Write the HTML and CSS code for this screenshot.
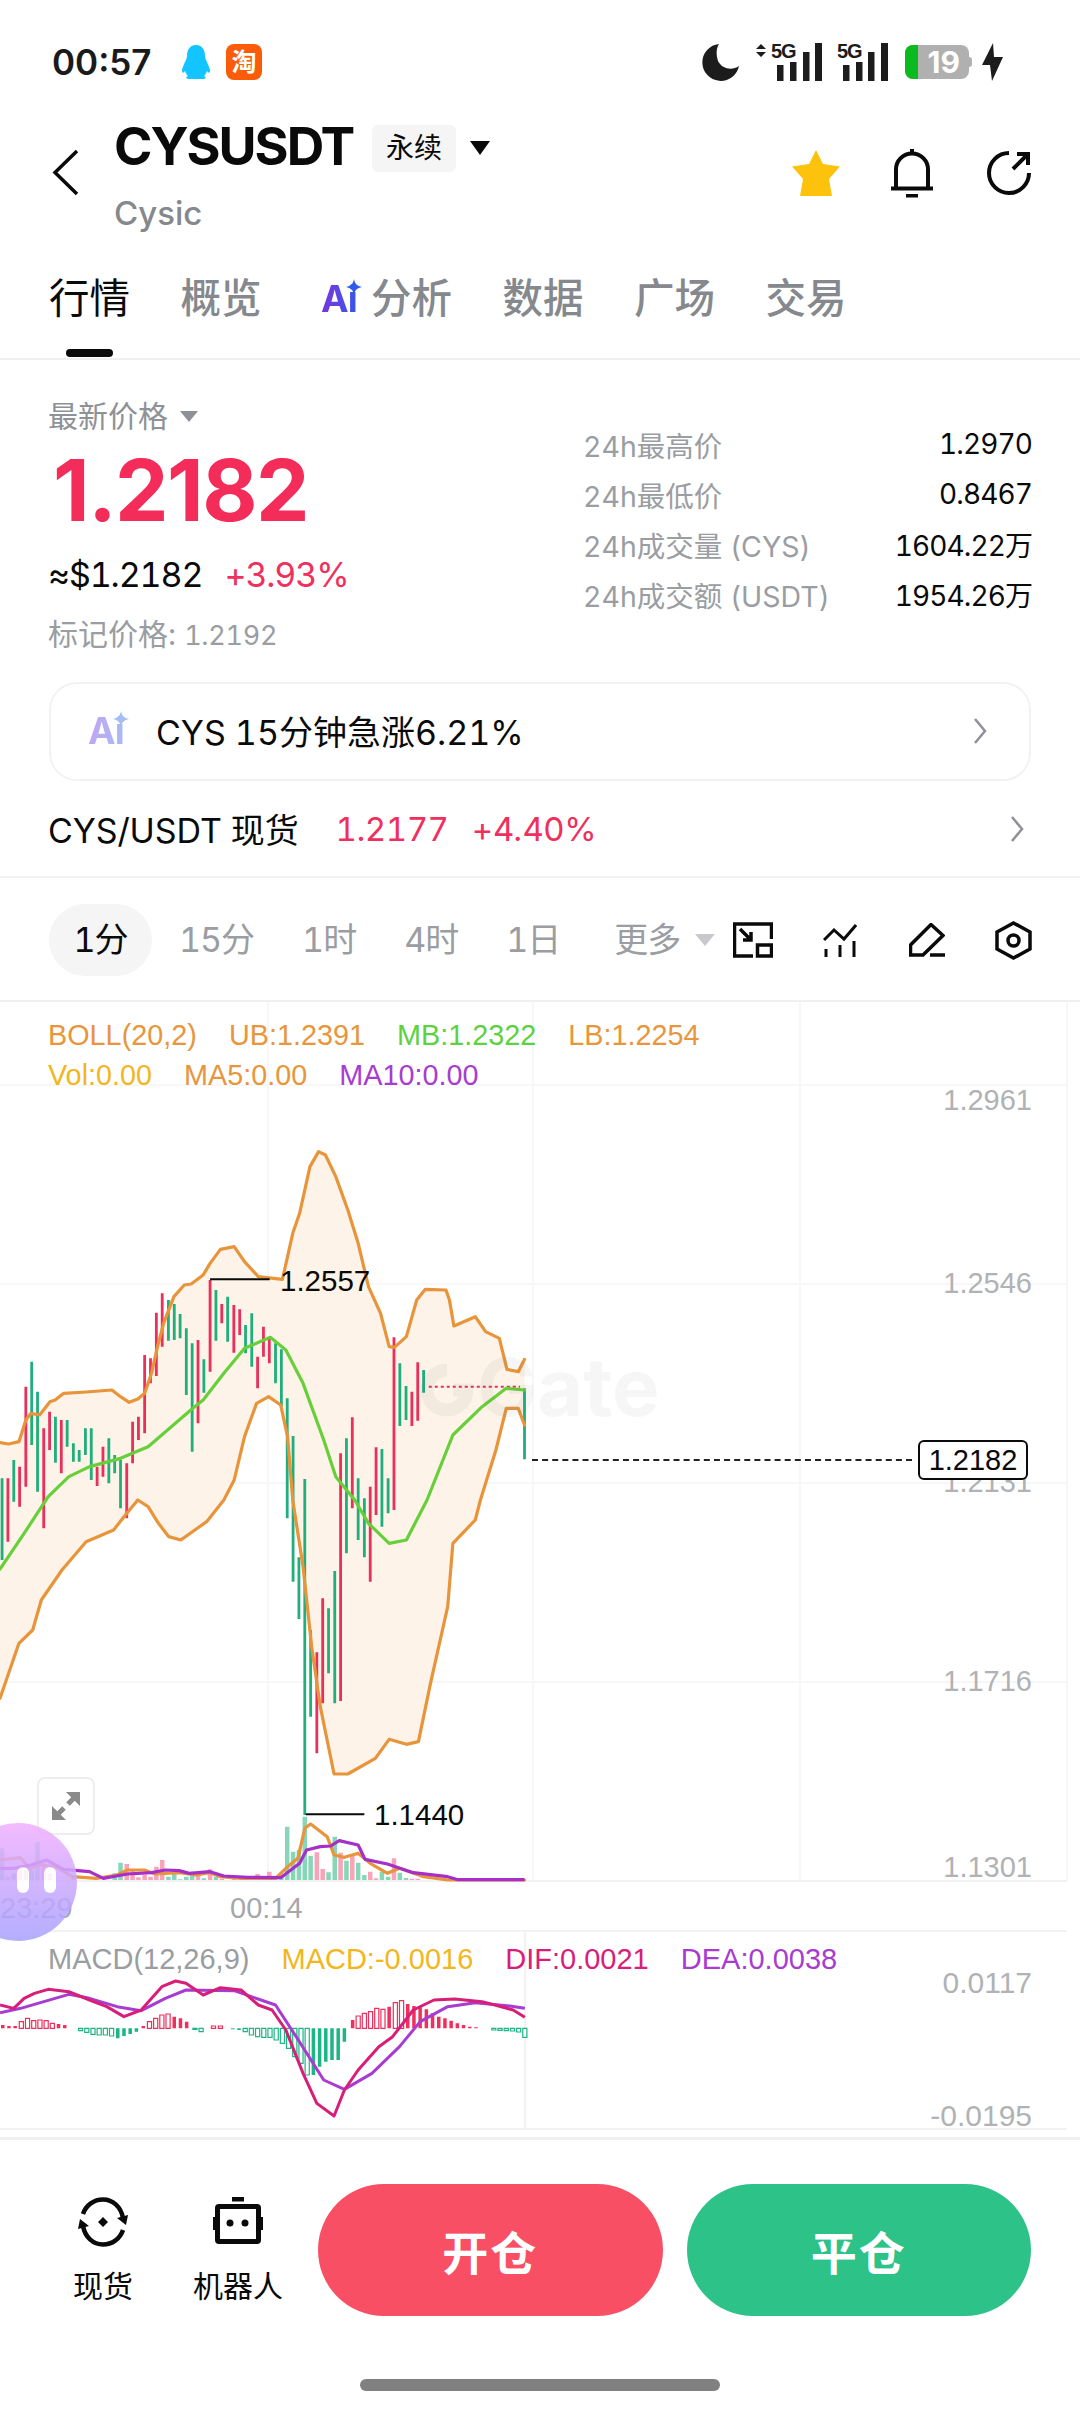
FILE: index.html
```html
<!DOCTYPE html>
<html lang="zh">
<head>
<meta charset="utf-8">
<title>CYSUSDT</title>
<link rel="stylesheet" href="styles.css">
</head>
<body>
<div class="page">
  <div class="status">
    <span class="time">00:57</span>
    <svg class="qq" viewBox="0 0 30 34"><path d="M15 0C8 0 6 6 6 11C6 14 3 18 1 25C1 28 2 29 4 26C5 29 6 30 7 31C4 32 5 34 9 34H21C25 34 26 32 23 31C24 30 25 29 26 26C28 29 29 28 29 25C27 18 24 14 24 11C24 6 22 0 15 0Z"/></svg>
    <span class="taobao">淘</span>
    <span class="status-right">
      <svg class="moon" viewBox="0 0 37 37"><path d="M17 0A18.5 18.5 0 1 0 37 22C30 27 20 25 16 17C14 11 14 5 17 0Z"/></svg>
      <svg class="signal first" viewBox="0 0 68 38">
        <path class="ink" d="M5 1L10 6H0ZM5 14L0 9H10Z"/>
        <text class="five-g" x="15" y="15">5G</text>
        <path class="ink" d="M21 22h6.500v16h-6.500zM34 19h6.500v19h-6.500zM47 9h6.500v29h-6.500zM59 0h7v38h-7z"/>
      </svg>
      <svg class="signal second" viewBox="0 0 54 38">
        <text class="five-g" x="1" y="15">5G</text>
        <path class="ink" d="M7 22h6.500v16h-6.500zM20 19h6.500v19h-6.500zM32 9h6.500v29h-6.500zM45 0h7v38h-7z"/>
      </svg>
      <span class="battery"><span class="battery-level"></span><span class="battery-num">19</span></span>
      <svg class="bolt" viewBox="0 0 21 38"><path d="M11 0L0 22H8L10 38L21 14H12Z"/></svg>
    </span>
  </div>

  <div class="header">
    <svg class="back" viewBox="0 0 28 48"><path d="M25 2L3 23.500L25 45"/></svg>
    <div class="name-block">
      <div class="title-row">
        <span class="title">CYSUSDT</span>
        <span class="badge">永续</span>
        <span class="caret"></span>
      </div>
      <div class="subtitle">Cysic</div>
    </div>
    <div class="header-actions">
      <svg class="star" viewBox="0 0 50 48"><path d="M25 1L32 15L49 17.500L38 30L41 47H9L12 30L1 17.500L18 15Z"/></svg>
      <svg class="bell" viewBox="0 0 42 50"><path d="M5 40V21.500a16 16 0 0 1 32 0V40M0 40.500H42M21 1V6"/><rect x="15" y="46" width="12" height="3.500"/></svg>
      <svg class="share" viewBox="0 0 50 50"><path d="M25 5A20 20 0 1 0 45 25M29 21L44 6M33 6H44V17"/></svg>
    </div>
  </div>

  <div class="tabs">
    <span class="tab active">行情</span>
    <span class="tab">概览</span>
    <span class="tab ai-tab"><span class="ai-mark">Ai<svg class="spark" viewBox="0 0 16 16"><path d="M8 0C9 5 11 7 16 8C11 9 9 11 8 16C7 11 5 9 0 8C5 7 7 5 8 0Z"/></svg></span>分析</span>
    <span class="tab">数据</span>
    <span class="tab">广场</span>
    <span class="tab">交易</span>
  </div>

  <div class="quote">
    <div class="quote-left">
      <div class="last-label">最新价格<span class="mini-caret"></span></div>
      <div class="last-price">1.2182</div>
      <div class="fiat-row"><span>≈$1.2182</span><span class="up">+3.93%</span></div>
      <div class="mark">标记价格: <span class="mark-num">1.2192</span></div>
    </div>
    <div class="stats">
      <div class="stat"><span>24h最高价</span><b>1.2970</b></div>
      <div class="stat"><span>24h最低价</span><b>0.8467</b></div>
      <div class="stat"><span>24h成交量 (CYS)</span><b>1604.22万</b></div>
      <div class="stat"><span>24h成交额 (USDT)</span><b>1954.26万</b></div>
    </div>
  </div>

  <div class="alert">
    <span class="ai-mark light">Ai<svg class="spark" viewBox="0 0 16 16"><path d="M8 0C9 5 11 7 16 8C11 9 9 11 8 16C7 11 5 9 0 8C5 7 7 5 8 0Z"/></svg></span>
    <span class="alert-text">CYS 15分钟急涨6.21%</span>
    <svg class="chev" viewBox="0 0 14 28"><path d="M2 2L12 14L2 26"/></svg>
  </div>

  <div class="spot">
    <span class="spot-name">CYS/USDT 现货</span>
    <span class="up spot-price">1.2177</span>
    <span class="up spot-change">+4.40%</span>
    <svg class="chev" viewBox="0 0 14 28"><path d="M2 2L12 14L2 26"/></svg>
  </div>

  <div class="intervals">
    <span class="interval on">1分</span>
    <span class="interval">15分</span>
    <span class="interval">1时</span>
    <span class="interval">4时</span>
    <span class="interval">1日</span>
    <span class="interval more">更多<span class="more-caret"></span></span>
    <svg class="tool t1" viewBox="0 0 40 36"><path d="M1.500 17V2H38.500V17M1.500 2V34H20M7 7L18 18M18 10V18H10"/><rect x="24.500" y="23" width="14" height="11"/></svg>
    <svg class="tool t2" viewBox="0 0 34 33"><path d="M1 16L11 6L21 15L33 1M3 25V33M17 21V33M31 17V33"/></svg>
    <svg class="tool t3" viewBox="0 0 36 34"><path d="M22 1.500L34 12.500L14 32H1.500V22ZM21 32H36"/></svg>
    <svg class="tool t4" viewBox="0 0 37 39"><path d="M18.500 2L35 11V28L18.500 37L2 28V11Z"/><circle cx="18.500" cy="19.500" r="5.500"/></svg>
  </div>

  <div class="chart">
    <svg class="plot" viewBox="0 0 3136 3414" preserveAspectRatio="none">
      <path class="rule" d="M0 3H3136"/>
      <path class="grid" d="M0 255H3098M0 852H3098M0 1449H3098M0 2046H3098M778 6V2643M1548 6V2643M2323 6V2643M3098 6V2643"/>
      <path class="grid strong" d="M0 2643H3098M140 2793H3098M0 3387H3098M1525 2793V3387"/>
      <polygon class="band" points="0,1328 25,1332 55,1325 75,1260 90,1240 115,1245 145,1205 160,1200 185,1180 250,1176 325,1170 350,1190 375,1207 400,1197 420,1180 440,1120 455,1050 475,970 505,890 535,855 555,852 590,825 610,790 640,748 680,740 710,785 750,830 820,838 835,770 850,700 870,640 900,500 925,455 945,465 975,530 1010,630 1040,730 1070,860 1105,940 1130,1040 1145,1042 1180,1010 1210,900 1235,868 1295,870 1305,900 1318,978 1380,950 1410,995 1450,1015 1472,1108 1505,1115 1523,1078 1523,1275 1505,1225 1470,1225 1440,1350 1395,1500 1380,1560 1315,1630 1300,1820 1250,2050 1215,2225 1180,2233 1130,2218 1090,2275 1010,2322 970,2322 930,2120 905,1940 880,1700 850,1500 835,1310 815,1215 780,1190 745,1210 710,1310 680,1440 650,1500 600,1565 525,1620 490,1610 460,1570 430,1520 400,1500 360,1550 330,1590 250,1625 180,1710 120,1800 95,1890 55,1930 0,2095"/>
      <path class="wick green" d="M6 1435V1680M40 1380V1505M92 1085V1335M109 1175V1475M161 1250V1388M195 1260V1340M213 1330V1385M230 1350V1385M248 1285V1365M265 1285V1440M316 1315V1450M333 1365V1420M350 1380V1525M489 900V1022M506 912V1020M523 942V1015M541 985V1185M558 1030V1355M592 1078V1178M627 870V1022M661 890V1025M713 975V1060M731 940V1100M800 1030V1150M817 1048V1220M834 1195V1555M851 1308V1745M868 1672V1857M885 1437V2445M902 1890V2150M954 1825V2020M972 1713V2110M1006 1315V1660M1040 1435V1620M1058 1495V1672M1109 1347V1580M1127 1435V1540M1161 1090V1278M1179 1158V1260M1230 1110V1178M1523 1165V1378"/>
      <path class="wick red" d="M23 1435V1625M57 1400V1520M75 1160V1460M127 1285V1585M144 1235V1350M178 1260V1420M282 1400V1458M299 1340V1430M368 1390V1555M385 1265V1390M402 1250V1320M420 1065V1300M437 1075V1150M454 938V1128M471 880V1040M575 1020V1270M610 840V1115M644 912V970M679 915V1058M696 928V1005M748 1070V1165M765 980V1070M782 1015V1090M920 1957V2260M937 1795V2110M989 1360V2103M1023 1252V1525M1075 1460V1745M1092 1342V1545M1144 1012V1530M1196 1175V1278M1213 1087V1262"/>
      <path class="dots" d="M1245 1160H1510"/>
      <polyline class="boll" points="0,1328 25,1332 55,1325 75,1260 90,1240 115,1245 145,1205 160,1200 185,1180 250,1176 325,1170 350,1190 375,1207 400,1197 420,1180 440,1120 455,1050 475,970 505,890 535,855 555,852 590,825 610,790 640,748 680,740 710,785 750,830 820,838 835,770 850,700 870,640 900,500 925,455 945,465 975,530 1010,630 1040,730 1070,860 1105,940 1130,1040 1145,1042 1180,1010 1210,900 1235,868 1295,870 1305,900 1318,978 1380,950 1410,995 1450,1015 1472,1108 1505,1115 1523,1078"/>
      <polyline class="boll" points="0,2095 55,1930 95,1890 120,1800 180,1710 250,1625 330,1590 360,1550 400,1500 430,1520 460,1570 490,1610 525,1620 600,1565 650,1500 680,1440 710,1310 745,1210 780,1190 815,1215 835,1310 850,1500 880,1700 905,1940 930,2120 970,2322 1010,2322 1090,2275 1130,2218 1180,2233 1215,2225 1250,2050 1300,1820 1315,1630 1380,1560 1395,1500 1440,1350 1470,1225 1505,1225 1523,1275"/>
      <polyline class="mid" points="0,1707 70,1600 140,1490 200,1430 260,1400 350,1375 430,1340 560,1225 590,1200 650,1120 710,1045 785,1012 830,1050 880,1150 940,1320 975,1430 1030,1500 1070,1570 1130,1630 1180,1620 1240,1500 1315,1305 1400,1220 1470,1165 1523,1170"/>
      <path class="marker" d="M610 838H783M888 2443H1058"/>
      <path class="vol green" d="M6 2640V2545M40 2640V2620M92 2640V2610M109 2640V2525M214 2640V2625M333 2640V2620M350 2640V2588M489 2640V2630M506 2640V2615M523 2640V2638M541 2640V2630M558 2640V2615M592 2640V2635M627 2640V2630M713 2640V2630M817 2640V2625M834 2640V2480M851 2640V2555M868 2640V2550M885 2640V2450M902 2640V2568M954 2640V2617M972 2640V2510M1006 2640V2582M1040 2640V2588M1058 2640V2625M1109 2640V2615M1127 2640V2630M1161 2640V2618M1179 2640V2634"/>
      <path class="vol red" d="M23 2640V2630M57 2640V2610M75 2640V2610M127 2640V2590M144 2640V2620M368 2640V2592M385 2640V2610M402 2640V2632M420 2640V2625M437 2640V2630M454 2640V2600M471 2640V2580M575 2640V2620M610 2640V2608M644 2640V2636M679 2640V2632M748 2640V2622M782 2640V2615M800 2640V2630M920 2640V2557M937 2640V2607M989 2640V2558M1023 2640V2565M1075 2640V2615M1092 2640V2635M1144 2640V2575M1196 2640V2636M1213 2640V2636"/>
      <polyline class="boll" points="0,2580 60,2573 85,2605 120,2595 160,2600 210,2630 280,2635 340,2625 370,2610 420,2610 450,2622 520,2618 570,2625 610,2618 640,2630 700,2635 800,2635 830,2605 865,2575 885,2485 902,2472 950,2510 970,2565 1000,2572 1040,2560 1075,2590 1125,2620 1160,2605 1230,2630 1300,2640 1523,2640"/>
      <polyline class="vol-ma" points="0,2605 40,2605 90,2595 135,2580 185,2608 260,2615 300,2635 370,2622 440,2618 480,2610 520,2612 550,2620 610,2615 650,2628 720,2632 815,2633 870,2590 890,2550 930,2540 960,2538 985,2522 1040,2535 1060,2578 1125,2592 1200,2618 1300,2630 1330,2639 1523,2639"/>
      <g transform="translate(0,2700) scale(2,1)">
        <path class="hist-red" d="M4 385V375M13 385V378M22 385V378M85 385V372M94 385V375M208 385V378M253 385V350M262 385V355M271 385V365M512 385V360M565 385V320M592 385V312M601 385V318M610 385V322M619 385V328M628 385V340M637 385V350M646 385V355M655 385V362M664 385V370M673 385V375M682 385V380M691 385V382"/>
        <path class="hist-red-o" d="M28 385V365H34V385ZM37 385V355H43V385ZM46 385V362H52V385ZM55 385V360H61V385ZM64 385V362H70V385ZM73 385V370H79V385ZM214 385V365H220V385ZM223 385V355H229V385ZM232 385V345H238V385ZM241 385V342H247V385ZM307 385V378H313V385ZM317 385V378H323V385ZM517 385V348H523V385ZM526 385V340H532V385ZM535 385V335H541V385ZM544 385V325H550V385ZM553 385V328H559V385ZM571 385V308H577V385ZM580 385V302H586V385Z"/>
        <path class="hist-green" d="M171 385V415M180 385V408M189 385V402M198 385V395M338 385V388M347 385V390M455 385V525M464 385V500M473 385V485M482 385V480M491 385V480M500 385V425"/>
        <path class="hist-green-o" d="M114 385V392H120V385ZM123 385V397H129V385ZM132 385V403H138V385ZM141 385V405H147V385ZM150 385V405H156V385ZM159 385V408H165V385ZM280 385V388H286V385ZM289 385V395H295V385ZM353 385V395H359V385ZM362 385V405H368V385ZM371 385V410H377V385ZM380 385V412H386V385ZM389 385V412H395V385ZM398 385V420H404V385ZM407 385V430H413V385ZM416 385V445H422V385ZM425 385V470H431V385ZM434 385V490H440V385ZM443 385V525H449V385ZM714 385V390H720V385ZM723 385V391H729V385ZM732 385V392H738V385ZM741 385V393H747V385ZM750 385V396H756V385ZM759 385V412H765V385Z"/>
        <polyline class="dea" points="0,338 30,325 100,283 130,295 170,320 205,332 240,295 270,270 340,272 400,315 430,410 470,540 500,568 540,520 580,440 610,365 650,320 690,308 740,318 762,325"/>
        <polyline class="dif" points="0,315 20,325 35,295 50,280 70,268 100,275 130,300 155,320 180,350 205,330 235,260 255,243 270,250 295,285 320,263 350,270 375,315 395,330 415,390 440,520 460,610 485,648 500,570 520,510 550,440 570,410 600,330 630,300 660,297 700,305 745,330 762,352"/>
      </g>
    </svg>

    <span class="watermark"><svg class="wm-logo" viewBox="0 0 54 54"><path d="M27 7A20 20 0 1 0 47 27H33"/></svg>Gate</span>

    <div class="legend boll-legend">
      <span class="c-orange">BOLL(20,2)</span>
      <span class="c-orange">UB:1.2391</span>
      <span class="c-green">MB:1.2322</span>
      <span class="c-orange">LB:1.2254</span>
    </div>
    <div class="legend vol-legend">
      <span class="c-yellow">Vol:0.00</span>
      <span class="c-orange">MA5:0.00</span>
      <span class="c-purple">MA10:0.00</span>
    </div>
    <div class="legend macd-legend">
      <span class="c-grey">MACD(12,26,9)</span>
      <span class="c-yellow">MACD:-0.0016</span>
      <span class="c-pink">DIF:0.0021</span>
      <span class="c-purple">DEA:0.0038</span>
    </div>

    <span class="ylabel y1">1.2961</span>
    <span class="ylabel y2">1.2546</span>
    <span class="ylabel y3">1.2131</span>
    <span class="ylabel y4">1.1716</span>
    <span class="ylabel y5">1.1301</span>
    <span class="ylabel y6">0.0117</span>
    <span class="ylabel y7">-0.0195</span>

    <span class="peak high">1.2557</span>
    <span class="peak low">1.1440</span>

    <span class="last-line"></span>
    <span class="last-tag">1.2182</span>

    <span class="expand">
      <svg viewBox="0 0 28 28"><path class="expand-head" d="M28 0H14L28 14ZM0 28H14L0 14Z"/><path class="expand-shaft" d="M22 6L16 12M6 22L12 16"/></svg>
    </span>

    <span class="xlabel x1">23:29</span>
    <span class="xlabel x2">00:14</span>

    <span class="bubble"><span class="pill"></span><span class="pill"></span></span>
  </div>

  <div class="bottom">
    <div class="actions">
      <div class="action">
        <svg class="swap" viewBox="0 0 50 50"><path class="swap-line" d="M5 17C8 8 16 2.500 25 2.500C35 2.500 43 10 45 21M45 33C42 42 34 47.500 25 47.500C15 47.500 7 40 5 29"/><path class="swap-fill" d="M25 20L30 25L25 30L20 25ZM50 18L48 28L39 21ZM0 32L2 22L11 29Z"/></svg>
        <span>现货</span>
      </div>
      <div class="action">
        <svg class="robot" viewBox="0 0 50 47"><rect class="robot-top" x="19" y="0" width="12" height="4.500"/><rect class="robot-body" x="4.500" y="9.500" width="41" height="35" rx="1.500"/><rect class="robot-top" x="0" y="20" width="3" height="13"/><rect class="robot-top" x="47" y="20" width="3" height="13"/><circle class="robot-eye" cx="17" cy="26" r="3.500"/><circle class="robot-eye" cx="32" cy="26" r="3.500"/></svg>
        <span>机器人</span>
      </div>
    </div>
    <button class="cta open">开仓</button>
    <button class="cta close">平仓</button>
  </div>
  <div class="home-bar"></div>
</div>
</body>
</html>
```

FILE: styles.css
```css
* { box-sizing: border-box; }
html, body { margin: 0; padding: 0; background: #fff; }
body { font-family: Inter, "Noto Sans CJK SC", sans-serif; color: #0a0a0a; font-variant-numeric: tabular-nums; }
.page { width: 1080px; height: 2412px; overflow: hidden; position: relative; }

.status { height: 120px; padding: 4px 0 0 52px; display: flex; align-items: center; }
.time { font-size: 35px; font-weight: 600; color: #1a1a1a; width: 129px; font-variant-numeric: normal; }
.qq { width: 30px; height: 34px; fill: #12c4ff; }
.taobao { width: 36px; height: 36px; margin-left: 15px; border-radius: 8px; background: #fb5c0a; color: #fff; font-size: 25px; font-weight: 700; line-height: 36px; text-align: center; }
.status-right { margin-left: auto; width: 378px; padding-right: 77px; display: flex; align-items: center; justify-content: flex-end; flex: none; }
.moon { width: 37px; height: 37px; fill: #1c1c1c; margin-right: 17px; flex: none; }
.ink { fill: #1c1c1c; }
.five-g { font-family: "Liberation Sans", sans-serif; font-size: 20px; font-weight: 700; fill: #1c1c1c; letter-spacing: -1px; }
.signal { height: 38px; flex: none; overflow: visible; }
.signal.first { width: 68px; }
.signal.second { width: 54px; margin-left: 12px; }
.battery { position: relative; width: 64px; height: 34px; margin-left: 15px; margin-right: 13px; background: #b0b0b0; border-radius: 8px; display: flex; align-items: center; justify-content: flex-end; padding-right: 9px; flex: none; }
.battery::after { content: ""; position: absolute; right: -3px; top: 12px; width: 3px; height: 10px; background: #b0b0b0; border-radius: 0 3px 3px 0; }
.battery-level { position: absolute; left: 0; top: 0; bottom: 0; width: 13px; background: #0bbb1e; border-radius: 8px 0 0 8px; }
.battery-num { color: #fff; font-size: 30px; font-weight: 700; line-height: 34px; font-variant-numeric: normal; }
.bolt { width: 21px; height: 38px; fill: #1c1c1c; flex: none; }

.header { height: 148px; position: relative; padding-left: 114px; padding-top: 1px; }
.back { position: absolute; left: 52px; top: 29px; width: 28px; height: 48px; fill: none; stroke: #0a0a0a; stroke-width: 3.500px; }
.title-row { display: flex; align-items: center; height: 52px; }
.title { font-size: 52px; font-weight: 700; letter-spacing: -2px; line-height: 52px; width: 258px; }
.badge { width: 84px; height: 47px; margin-top: 3px; border-radius: 6px; background: #f5f5f5; font-size: 28px; line-height: 47px; text-align: center; }
.caret { margin-left: 14px; margin-top: 2px; width: 0; height: 0; border-left: 10px solid transparent; border-right: 10px solid transparent; border-top: 14px solid #0a0a0a; }
.subtitle { margin-top: 20px; font-size: 33px; font-weight: 500; line-height: 40px; color: #85888c; }
.header-actions { position: absolute; right: 46px; top: 28px; display: flex; align-items: center; }
.star { width: 50px; height: 48px; fill: #fdc20c; margin-right: 50px; }
.bell { width: 42px; height: 50px; fill: #0a0a0a; margin-right: 51px; overflow: visible; }
.bell path { fill: none; stroke: #0a0a0a; stroke-width: 4px; }
.share { width: 50px; height: 50px; fill: none; stroke: #0a0a0a; stroke-width: 4px; }

.tabs { height: 92px; padding: 0 0 28px 49px; display: flex; align-items: center; gap: 50.500px; border-bottom: 2px solid #f0f0f0; }
.tab { font-size: 40.500px; font-weight: 500; line-height: 60px; color: #85888c; position: relative; white-space: nowrap; display: flex; align-items: center; }
.tab.active { color: #0a0a0a; font-weight: 400; }
.tab.active::after { content: ""; position: absolute; left: 17px; top: 80px; width: 47px; height: 8px; border-radius: 4px; background: #0a0a0a; }
.ai-tab { margin-left: 9px; }
.ai-mark { position: relative; display: inline-block; width: 40px; margin-right: 10px; font-size: 37px; font-weight: 700; letter-spacing: -1px; line-height: 40px; background: linear-gradient(90deg, #7a35e0, #2f5be8); -webkit-background-clip: text; background-clip: text; color: transparent; }
.spark { position: absolute; right: -1px; top: 0; width: 16px; height: 16px; fill: #2f5be8; }
.ai-mark.light { background-image: linear-gradient(100deg, #c3a4f2, #a5bdf7); }
.ai-mark.light .spark { fill: #a5bdf7; }

.quote { height: 322px; padding: 40px 48px 0 48px; display: flex; justify-content: space-between; }
.last-label { font-size: 30px; line-height: 32px; color: #8e9196; display: flex; align-items: center; }
.mini-caret { margin-left: 12px; width: 0; height: 0; border-left: 9px solid transparent; border-right: 9px solid transparent; border-top: 11px solid #8e9196; }
.last-price { margin: 15px 0 0 5px; font-size: 85px; font-weight: 700; line-height: 88px; color: #f32c5a; letter-spacing: -1.500px; font-variant-numeric: normal; }
.fiat-row { margin-top: 20px; font-size: 34px; line-height: 40px; display: flex; gap: 22px; letter-spacing: -1.100px; }
.up { color: #ef2f5c; }
.mark { margin-top: 21px; font-size: 30px; line-height: 36px; color: #9a9da1; }
.mark-num { font-size: 27px; letter-spacing: -.3px; }
.stats { width: 449px; padding-top: 19px; }
.stat { height: 50px; display: flex; justify-content: space-between; align-items: center; font-size: 28.500px; color: #9a9da1; }
.stat b { font-weight: 400; font-size: 28px; letter-spacing: -.9px; color: #0a0a0a; }

.alert { margin: 0 49px; height: 99px; border: 2px solid #f2f2f2; border-radius: 28px; display: flex; align-items: center; padding: 0 42px 2px 37px; }
.alert .ai-mark { margin-right: 28px; }
.alert-text { font-size: 34px; }
.alert .chev { margin-left: auto; }
.chev { width: 14px; height: 28px; fill: none; stroke: #8e9196; stroke-width: 2.500px; }
.spot { height: 97px; padding: 0 56px 0 48px; display: flex; align-items: center; font-size: 33px; border-bottom: 2px solid #f2f2f2; }
.spot-name { font-size: 34px; letter-spacing: -.1px; }
.spot-price { margin-left: 37px; letter-spacing: -.5px; }
.spot-change { margin-left: 23px; font-variant-numeric: normal; letter-spacing: -.2px; }
.spot .chev { margin-left: auto; }

.intervals { height: 122px; padding: 2px 48px 0 49px; display: flex; align-items: center; }
.interval { font-size: 34px; letter-spacing: -1px; color: #9a9da1; line-height: 72px; margin-right: 48px; white-space: nowrap; display: flex; align-items: center; }
.interval.on { width: 103px; height: 72px; margin-right: 27px; justify-content: center; border-radius: 36px; background: #f5f5f5; color: #0a0a0a; }
.interval.more { margin-left: 6px; margin-right: 0; }
.more-caret { margin-left: 15px; width: 0; height: 0; border-left: 10px solid transparent; border-right: 10px solid transparent; border-top: 12px solid #c8c9cc; }
.tool { fill: none; stroke: #0a0a0a; stroke-width: 3.500px; flex: none; }
.t1 { width: 40px; height: 36px; margin-left: auto; }
.t2 { width: 34px; height: 33px; margin-left: 50px; stroke-width: 3px; }
.t3 { width: 36px; height: 34px; margin-left: 52px; }
.t4 { width: 37px; height: 39px; margin-left: 50px; }

.chart { height: 1137px; position: relative; }
.plot { position: absolute; left: 0; top: 0; width: 1080px; height: 1138px; }
.plot * { vector-effect: non-scaling-stroke; }
.rule { stroke: #f0f0f0; stroke-width: 2px; fill: none; }
.grid { stroke: #f7f7f7; stroke-width: 2px; fill: none; }
.grid.strong { stroke: #f2f2f2; }
.band { fill: #fdf3e8; }
.wick { fill: none; stroke-width: 2.800px; }
.wick.green { stroke: #1fae7c; }
.wick.red { stroke: #e8305a; }
.dots { fill: none; stroke: #e8305a; stroke-width: 2px; stroke-dasharray: 3 3; }
.boll { fill: none; stroke: #e8943a; stroke-width: 3.200px; stroke-linejoin: round; stroke-linecap: round; }
.mid { fill: none; stroke: #66cf3a; stroke-width: 3.200px; stroke-linejoin: round; stroke-linecap: round; }
.marker { fill: none; stroke: #0a0a0a; stroke-width: 2px; }
.vol { fill: none; stroke-width: 4.500px; }
.vol.green { stroke: #86d6b7; }
.vol.red { stroke: #f8a3b8; }
.vol-ma { fill: none; stroke: #a52fc8; stroke-width: 3.200px; stroke-linejoin: round; }
.hist-red { fill: none; stroke: #ef2f5c; stroke-width: 3.500px; }
.hist-green { fill: none; stroke: #1db583; stroke-width: 3.500px; }
.hist-red-o { fill: #fff; stroke: #ef2f5c; stroke-width: 1.200px; }
.hist-green-o { fill: #fff; stroke: #1db583; stroke-width: 1.200px; }
.dif { fill: none; stroke: #d81e78; stroke-width: 3px; stroke-linejoin: round; }
.dea { fill: none; stroke: #a83cd0; stroke-width: 3px; stroke-linejoin: round; }

.watermark { position: absolute; left: 420px; top: 342px; display: flex; align-items: center; gap: 3px; font-size: 80px; font-weight: 700; line-height: 90px; color: rgba(60, 70, 60, .05); }
.wm-logo { width: 54px; height: 54px; margin-top: 6px; fill: none; stroke: rgba(60, 70, 60, .05); stroke-width: 13px; }

.legend { position: absolute; left: 48px; display: flex; gap: 32px; font-family: "Liberation Sans", sans-serif; font-size: 28.800px; line-height: 36px; white-space: nowrap; }
.boll-legend { top: 17px; }
.vol-legend { top: 57px; }
.macd-legend { top: 941px; font-size: 29px; gap: 32px; }
.c-orange { color: #e8963c; }
.c-green { color: #5fd13f; }
.c-yellow { color: #f2b61e; }
.c-purple { color: #a83cd0; }
.c-grey { color: #9a9da1; }
.c-pink { color: #d81e78; }

.ylabel { position: absolute; right: 48px; font-family: "Liberation Sans", sans-serif; font-size: 29px; line-height: 36px; color: #b0b2b5; }
.y1 { top: 82px; }
.y2 { top: 265px; }
.y3 { top: 464px; }
.y4 { top: 663px; }
.y5 { top: 849px; }
.y6 { top: 965px; font-size: 30px; }
.y7 { top: 1098px; font-size: 30px; }

.peak { position: absolute; font-family: "Liberation Sans", sans-serif; font-size: 29.500px; line-height: 36px; color: #0a0a0a; }
.high { left: 280px; top: 263px; }
.low { left: 374px; top: 797px; }

.last-line { position: absolute; left: 532px; width: 380px; top: 459px; border-top: 2px dashed #222; }
.last-tag { position: absolute; left: 918px; top: 440px; width: 110px; height: 40px; border: 2px solid #0a0a0a; border-radius: 6px; background: #fff; font-family: "Liberation Sans", sans-serif; font-size: 29px; line-height: 37px; text-align: center; color: #0a0a0a; }

.expand { position: absolute; left: 37px; top: 777px; width: 58px; height: 58px; border: 2px solid #eeeeee; border-radius: 8px; background: #fff; display: flex; align-items: center; justify-content: center; }
.expand svg { width: 28px; height: 28px; }
.expand-head { fill: #8a8a8a; }
.expand-shaft { fill: none; stroke: #8a8a8a; stroke-width: 5px; }

.xlabel { position: absolute; top: 890px; font-family: "Liberation Sans", sans-serif; font-size: 29px; line-height: 36px; color: #a5a7aa; }
.x1 { left: 0; }
.x2 { left: 230px; }

.bubble { position: absolute; left: -41px; top: 823px; width: 118px; height: 118px; border-radius: 50%; background: linear-gradient(180deg, #f2b0ff, #a8a2ff); opacity: .86; display: flex; align-items: flex-start; justify-content: flex-end; gap: 15px; padding: 44px 21px 0 0; }
.pill { width: 12px; height: 26px; border-radius: 6px; background: #fff; }

.bottom { height: 242px; border-top: 3px solid #f0f0f0; padding: 44px 49px 0; display: flex; align-items: flex-start; }
.actions { display: flex; gap: 27px; width: 243px; margin-right: 26px; }
.action { width: 108px; padding-top: 13px; display: flex; flex-direction: column; align-items: center; font-size: 30px; line-height: 36px; }
.action span { margin-top: 21px; }
.swap { width: 50px; height: 50px; }
.robot { width: 50px; height: 47px; margin-bottom: 3px; }
.swap-line { fill: none; stroke: #0a0a0a; stroke-width: 4.500px; }
.robot-body { fill: none; stroke: #0a0a0a; stroke-width: 5px; }
.swap-fill, .robot-top, .robot-eye { fill: #0a0a0a; }
.cta { width: 345px; height: 132px; border: 0; border-radius: 66px; color: #fff; font-family: Inter, "Noto Sans CJK SC", sans-serif; font-size: 46px; font-weight: 700; letter-spacing: 2px; padding: 0; }
.open { background: #f94f64; margin-right: 24px; }
.close { background: #2dc287; }
.home-bar { width: 360px; height: 12px; margin: 0 auto; border-radius: 6px; background: #808080; }
```
